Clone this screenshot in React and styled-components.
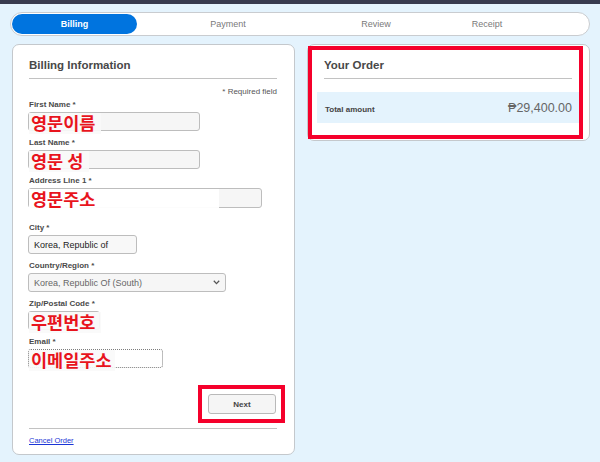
import React from "react";
import styled, { createGlobalStyle } from "styled-components";

const Global = createGlobalStyle`
  html, body { margin: 0; padding: 0; }
  body {
    background: #e4f3fd;
    font-family: "Liberation Sans", Arial, sans-serif;
    width: 600px;
    height: 462px;
    overflow: hidden;
  }
`;

const Page = styled.div`
  width: 600px;
  height: 462px;
  background: #e4f3fd;
  display: flex;
  flex-direction: column;
`;

const TopStrip = styled.div`
  height: 4px;
  background: #383b4f;
`;

const Stepper = styled.div`
  margin: 8px 10px 0 10px;
  height: 22px;
  border: 1px solid #c9ccd0;
  border-radius: 12px;
  background: #fff;
  display: grid;
  grid-template-columns: 125px 182px 114px 108px 1fr;
  align-items: center;
  padding: 0 1px;
`;

const Step = styled.div`
  height: 20px;
  display: flex;
  align-items: center;
  justify-content: center;
  font-size: 9px;
  border-radius: 10px;
  color: ${(p) => (p.$active ? "#fff" : "#7a7a7a")};
  background: ${(p) => (p.$active ? "#0074df" : "transparent")};
  font-weight: ${(p) => (p.$active ? 700 : 400)};
`;

const Columns = styled.div`
  display: flex;
  gap: 12px;
  margin: 8px 10px 0 12px;
  align-items: flex-start;
`;

const Card = styled.div`
  position: relative;
  background: #fff;
  border: 1px solid #c4c8cc;
  border-radius: 7px;
  padding: 12px 17px 0 16px;
  box-sizing: border-box;
  width: ${(p) => p.$w}px;
  height: ${(p) => p.$h}px;
  display: flex;
  flex-direction: column;
`;

const CardTitle = styled.div`
  font-size: 11.5px;
  font-weight: 700;
  color: #484848;
  line-height: 16px;
`;

const Divider = styled.div`
  height: 1px;
  background: #c2c2c2;
  margin-top: ${(p) => p.$mt || 0}px;
`;

const Required = styled.div`
  text-align: right;
  font-size: 8px;
  color: #555;
  margin-top: 8px;
  line-height: 10px;
`;

const Field = styled.div`
  display: flex;
  flex-direction: column;
  margin-top: ${(p) => p.$mt}px;
`;

const Label = styled.div`
  font-size: 8px;
  font-weight: 700;
  color: #4a4a4a;
  line-height: 12px;
  height: 12px;
`;

const InputWrap = styled.div`
  position: relative;
  margin-top: 1px;
  margin-left: -1px;
  width: ${(p) => p.$w}px;
  height: ${(p) => p.$h || 19}px;
  box-sizing: border-box;
  border: 1px ${(p) => (p.$focus ? "dotted #7d7d7d" : "solid #bdbdbd")};
  border-radius: 3px;
  background: ${(p) => p.$bg || "#f6f6f6"};
  display: flex;
  align-items: center;
  padding: 0 5px;
  font-size: 9px;
  color: ${(p) => p.$color || "#222"};
`;

const Chevron = styled.svg`
  position: absolute;
  right: 5px;
  top: 6px;
`;

const Overlay = styled.span`
  position: absolute;
  left: 0;
  top: 0;
  width: ${(p) => p.$w}px;
  height: 21px;
  background: ${(p) => p.$bg || "rgba(250,250,250,0.9)"};
  color: #e8141d;
  font-family: "Noto Sans CJK KR", "Noto Sans", sans-serif;
  font-weight: 600;
  font-size: 17.5px;
  line-height: 19px;
  padding-left: 2px;
  white-space: pre;
`;

const ButtonRow = styled.div`
  display: flex;
  justify-content: flex-end;
  margin-top: 26px;
  padding-right: 1px;
`;

const NextButton = styled.div`
  position: relative;
  width: 68px;
  height: 20px;
  box-sizing: border-box;
  border: 1px solid #b9b9b9;
  border-radius: 3px;
  background: #f5f5f5;
  font-size: 8px;
  font-weight: 700;
  color: #444;
  display: flex;
  align-items: center;
  justify-content: center;
`;

const Annotation = styled.div`
  position: absolute;
  border: 4.5px solid #f5002b;
  pointer-events: none;
  left: ${(p) => p.$l}px;
  top: ${(p) => p.$t}px;
  right: ${(p) => p.$r}px;
  bottom: ${(p) => p.$b}px;
`;

const CancelLink = styled.a`
  font-size: 7.5px;
  color: #1a35d6;
  text-decoration: underline;
  margin-top: 7px;
  line-height: 10px;
`;

const TotalRow = styled.div`
  margin: 13px -7px 0 -7px;
  height: 31px;
  background: #e4f3fd;
  display: flex;
  align-items: center;
  justify-content: space-between;
  padding: 0 7px 0 8px;
`;

const TotalLabel = styled.div`
  font-size: 8px;
  font-weight: 700;
  color: #444;
  margin-top: 3px;
`;

const TotalValue = styled.div`
  font-size: 12.5px;
  color: #666;
`;

export default function App() {
  return (
    <>
      <Global />
      <Page>
        <TopStrip />
        <Stepper>
          <Step $active>Billing</Step>
          <Step>Payment</Step>
          <Step>Review</Step>
          <Step>Receipt</Step>
        </Stepper>
        <Columns>
          <Card $w={284} $h={411}>
            <CardTitle>Billing Information</CardTitle>
            <Divider $mt={5} />
            <Required>* Required field</Required>
            <Field $mt={2}>
              <Label>First Name *</Label>
              <InputWrap $w={172}>
                <Overlay $w={70}>영문이름</Overlay>
              </InputWrap>
            </Field>
            <Field $mt={6}>
              <Label>Last Name *</Label>
              <InputWrap $w={172}>
                <Overlay $w={58}>영문 성</Overlay>
              </InputWrap>
            </Field>
            <Field $mt={6}>
              <Label>Address Line 1 *</Label>
              <InputWrap $w={234} $h={20}>
                <Overlay $w={188} $bg="rgba(255,255,255,0.95)">영문주소</Overlay>
              </InputWrap>
            </Field>
            <Field $mt={14}>
              <Label>City *</Label>
              <InputWrap $w={109} $bg="#f8f8f8">Korea, Republic of</InputWrap>
            </Field>
            <Field $mt={6}>
              <Label>Country/Region *</Label>
              <InputWrap $w={198} $bg="#f6f6f6" $color="#666">
                Korea, Republic Of (South)
                <Chevron width="7" height="5" viewBox="0 0 7 5">
                  <path d="M0.8 0.8 L3.5 3.6 L6.2 0.8" fill="none" stroke="#555" strokeWidth="1.3" />
                </Chevron>
              </InputWrap>
            </Field>
            <Field $mt={6}>
              <Label>Zip/Postal Code *</Label>
              <InputWrap $w={72}>
                <Overlay $w={70}>우편번호</Overlay>
              </InputWrap>
            </Field>
            <Field $mt={6}>
              <Label>Email *</Label>
              <InputWrap $w={135} $focus $bg="#fff">
                <Overlay $w={84}>이메일주소</Overlay>
              </InputWrap>
            </Field>
            <ButtonRow>
              <NextButton>
                Next
                <Annotation $l={-11} $t={-10} $r={-10} $b={-10} />
              </NextButton>
            </ButtonRow>
            <Divider $mt={14} />
            <CancelLink href="#">Cancel Order</CancelLink>
          </Card>
          <Card $w={284} $h={97}>
            <Annotation $l={0} $t={1} $r={6} $b={1} />
            <CardTitle>Your Order</CardTitle>
            <Divider $mt={5} />
            <TotalRow>
              <TotalLabel>Total amount</TotalLabel>
              <TotalValue>₱29,400.00</TotalValue>
            </TotalRow>
          </Card>
        </Columns>
      </Page>
    </>
  );
}
